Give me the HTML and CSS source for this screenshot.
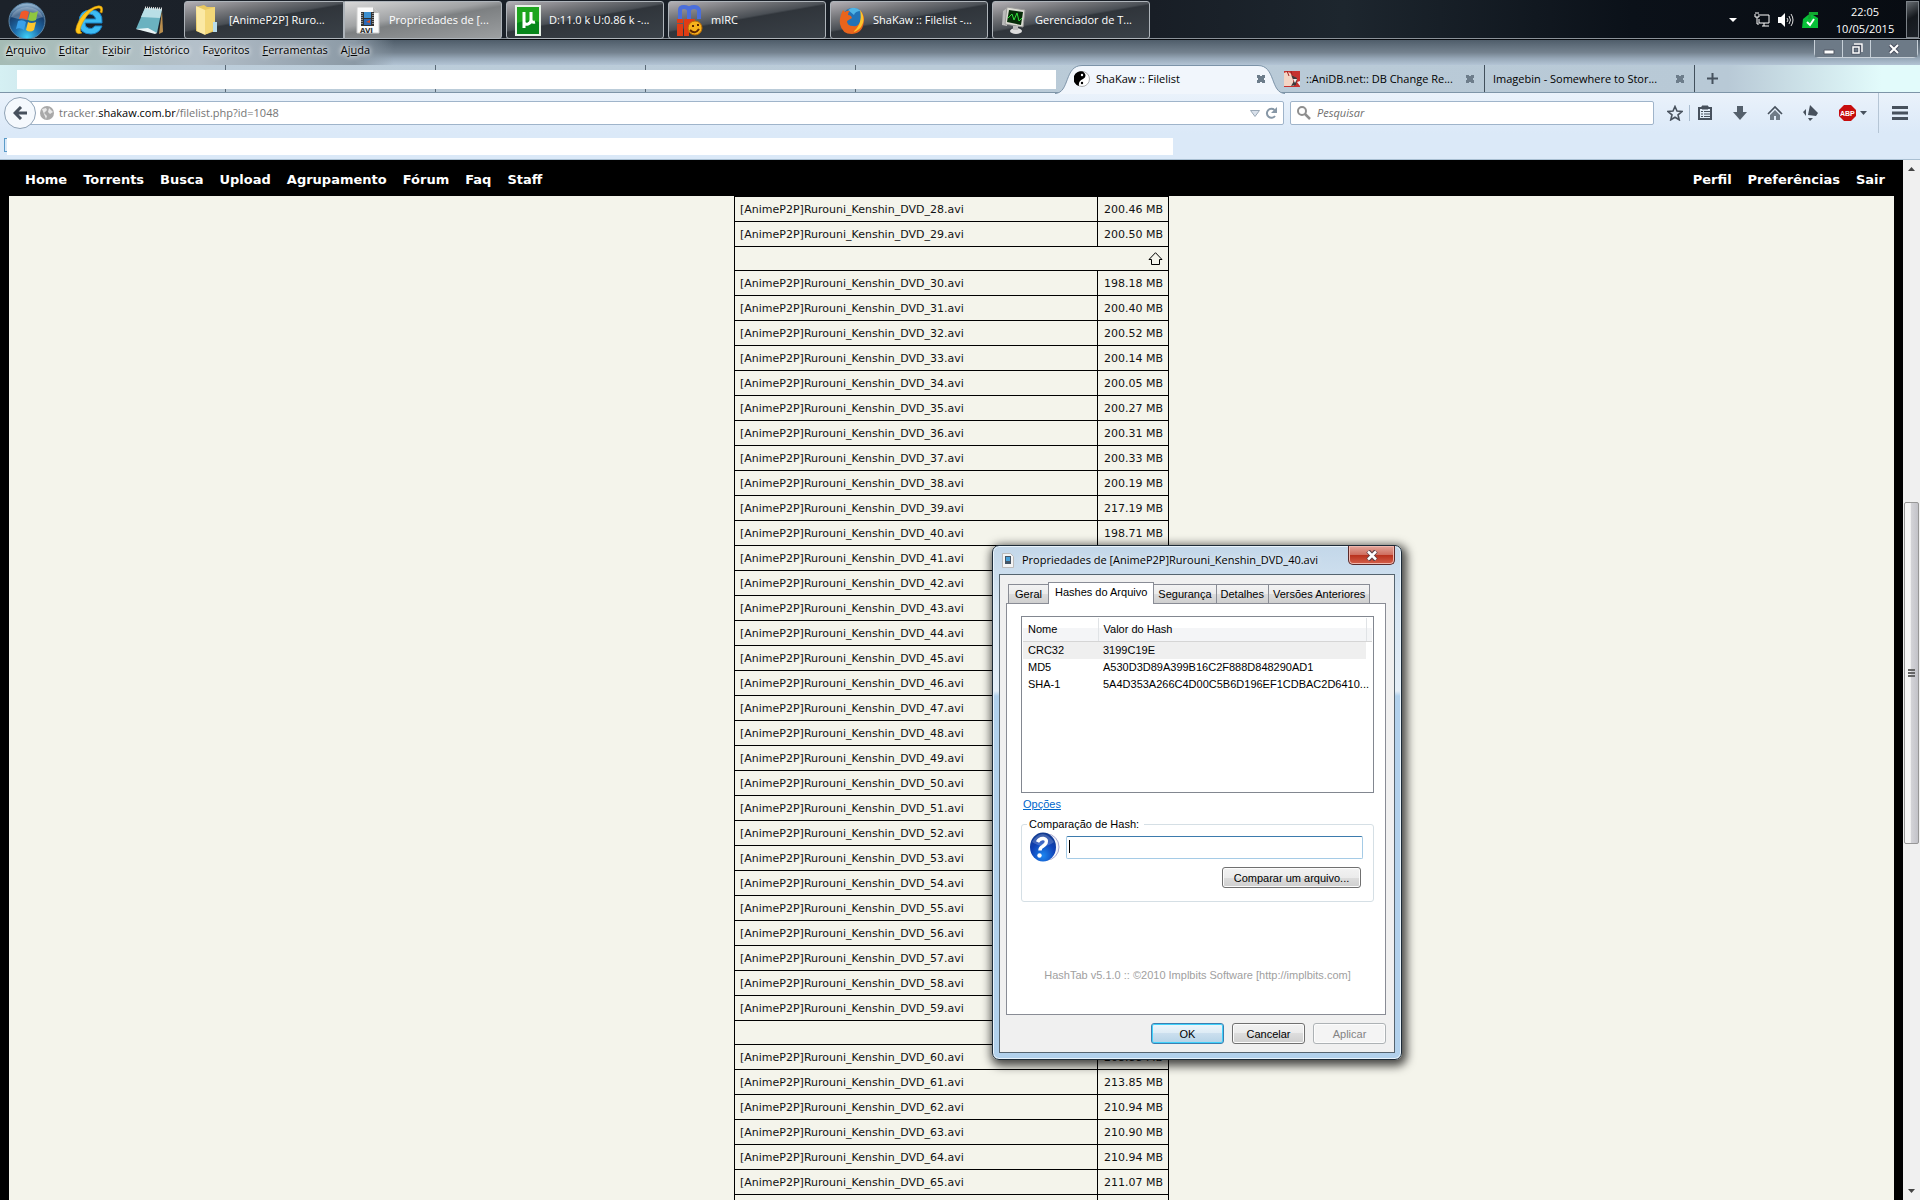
FILE: index.html
```html
<!DOCTYPE html>
<html lang="pt-BR">
<head>
<meta charset="utf-8">
<title>ShaKaw :: Filelist</title>
<link rel="stylesheet" href="styles.css">
</head>
<body>
<header class="taskbar">
  <div class="launchers">
    <button class="launch" aria-label="Iniciar"><svg width="40" height="38" viewBox="0 0 40 38"><defs><radialGradient id="orb" cx=".5" cy=".95" r=".9"><stop offset="0" stop-color="#3fd0f8"/><stop offset=".4" stop-color="#1f6fae"/><stop offset=".75" stop-color="#17406f"/><stop offset="1" stop-color="#8fb0cc"/></radialGradient></defs><circle cx="20" cy="20" r="18" fill="url(#orb)" stroke="#5d87a8"/><path d="M4 16a17 15 0 0 1 32 0q-15 6-32 0z" fill="#fff" opacity=".25"/><path d="M14 11q4-3 8 0l-2 8q-4-3-8-1z" fill="#f0592a"/><path d="M23 11q4 2 8-1l-2 9q-4 2-8 0z" fill="#8fc63f"/><path d="M11 20q5-2 8 1l-2 8q-4-3-8-1z" fill="#3aa0e8"/><path d="M21 21q3 2 8 0l-2 8q-4 3-8 0z" fill="#fdc62f"/></svg></button>
    <button class="launch" aria-label="Internet Explorer"><svg width="34" height="34" viewBox="0 0 34 34"><path d="M29 20q1-13-11-13T6 19q0 12 12 12 8 0 11-8h-7q-3 4-7 2-3-1-3-5zM12 16q1-5 5-5t6 5z" fill="#3dbcf4" fill-rule="evenodd" stroke="#1b86cc"/><path d="M29 10q3-10-8-6Q9 9 4 22q-4 11 5 8-4-2 1-11Q17 6 25 5q4 0 2 4z" fill="#ffc61a" stroke="#d99500" stroke-width=".6"/></svg></button>
    <button class="launch" aria-label="Bloco de notas"><svg width="34" height="34" viewBox="0 0 34 34"><path d="M29 7l1 22-4 2z" fill="#b98e4e"/><path d="M12 5l17 1-5 24-21-4z" fill="#6bb2c0"/><path d="M12 5l17 1-2 9L8 14z" fill="#b9dfe6"/><path d="M3 26l12-1 9 5-2 1z" fill="#e8f3f5"/><path d="M12 5l17 1" stroke="#ddd" stroke-width="3" stroke-dasharray="1 1"/></svg></button>
  </div>
  <nav class="tasks" aria-label="Janelas">
    <button class="task joined"><svg width="26" height="32" viewBox="0 0 26 32"><path d="M3 3l8-2 3 2h8v24l-8 3-6-1-5-2z" fill="#e9c860"/><path d="M3 2l9 4v25l-8-4z" fill="#fbe9a4"/><path d="M12 6l10-3v15q-3 1-2 8l-8 5z" fill="#f3d778"/><path d="M20 18h4v10h-4z" fill="#b8dcec"/></svg><span>[AnimeP2P] Ruro...</span></button>
    <button class="task active"><svg width="26" height="28" viewBox="0 0 26 28"><path d="M2 1h16l6 6v20H2z" fill="#fafafa" stroke="#ccc"/><path d="M18 1v6h6z" fill="#bbb"/><path d="M6 6h13v14H6z" fill="#333"/><path d="M9 6h7v6H9z" fill="#3c8fd0"/><path d="M9 13h7v6H9z" fill="#2a68b8"/><path d="M11 16l4-2v3z" fill="#d64a20"/><path d="M7 7v12M18 7v12" stroke="#eee" stroke-dasharray="1 1"/><text x="5" y="27" class="avi">AVI</text></svg><span>Propriedades de [...</span></button>
    <button class="task"><svg width="26" height="31" viewBox="0 0 26 31"><path d="M1 1h24v29H1z" fill="#1ea51e" stroke="#e8f2e8" stroke-width="2"/><path d="M2 18q12-5 22-1v12H2z" fill="#06861a"/><path d="M9 7v16M9 9v7q0 4 4 3 3-1 3-4V7M16 14q0 4 4 3" fill="none" stroke="#fff" stroke-width="3"/></svg><span>D:11.0 k U:0.86 k -...</span></button>
    <button class="task"><svg width="26" height="33" viewBox="0 0 26 33"><path d="M3 15V6q0-3 4-3t5 3v9M12 15V6q1-3 5-3t5 3v9" fill="none" stroke="#4a6edb" stroke-width="4"/><path d="M0 15h6v4H0zM0 20h6v12H0zM7 15h11v5h-6v12H7z" fill="#e03c14"/><circle cx="18" cy="24" r="7" fill="#f7b21c" stroke="#b86a08"/><path d="M13 26q5 5 9-1M16 21v2M21 20v2" fill="none" stroke="#5d2500" stroke-width="2"/></svg><span>mIRC</span></button>
    <button class="task"><svg width="26" height="32" viewBox="0 0 26 32"><circle cx="14" cy="15" r="11" fill="#2173b8"/><path d="M9 6q6-5 13 1-6 0-7 4z" fill="#4fb4e6"/><path d="M4 6q-4 8-3 14 2 10 12 10 12-1 12-15 0-5-4-9 3 6 0 12-2 5-7 4-6 0-6-5l5-3q-1-3-4-3 0-3 2-4-3-1-5 1z" fill="#e9641c"/><path d="M21 6q5 6 3 13-3 8-10 9 10-8 7-22z" fill="#fbc42c"/></svg><span>ShaKaw :: Filelist -...</span></button>
    <button class="task"><svg width="26" height="32" viewBox="0 0 26 32"><path d="M2 7l4-3v18l-5-1z" fill="#bbb"/><path d="M6 3l18 3-2 17L4 20z" fill="#dcdcd4" stroke="#999"/><path d="M8 6l14 2-2 13L6 18z" fill="#062c08"/><path d="M7 14l4-4 2 6 3-7 2 8 3-3" fill="none" stroke="#2fe03a"/><ellipse cx="15" cy="27" rx="6" ry="3" fill="#ddd"/><path d="M12 22h5v4h-5z" fill="#bbb"/></svg><span>Gerenciador de T...</span></button>
  </nav>
  <div class="tray">
    <svg width="8" height="4" viewBox="0 0 8 4"><path d="M0 0h8L4 4z" fill="#fff"/></svg>
    <svg width="16" height="16" viewBox="0 0 16 16" fill="none" stroke="#fff"><path d="M6 3h9v8H5V7M8 14h7M10 11v3M1 2v3h4V2M2 0v2M4 0v2M3 5v7h2"/></svg>
    <svg width="16" height="14" viewBox="0 0 16 14"><path d="M0 4h3l4-4v14l-4-4H0z" fill="#fff"/><path d="M9 5q2 2 0 4M11 3q3 4 0 8M13 1q4 6 0 12" fill="none" stroke="#ddd"/></svg>
    <svg width="17" height="16" viewBox="0 0 17 16"><path d="M1 7l5-4h5l5 3v10H0z" fill="#08c038"/><path d="M7 0h9v3H9v4H6z" fill="#12a830"/><path d="M5 10l3 3 4-6" fill="none" stroke="#fff" stroke-width="2"/></svg>
    <time class="clock">22:05<br>10/05/2015</time>
    <button class="show-desktop" aria-label="Mostrar área de trabalho"></button>
  </div>
</header>

<main class="browser">
  <div class="titlebar">
    <nav class="menu" aria-label="Menu">
      <button><u>A</u>rquivo</button><button><u>E</u>ditar</button><button>E<u>x</u>ibir</button><button><u>H</u>istórico</button><button>Fa<u>v</u>oritos</button><button><u>F</u>erramentas</button><button>Aj<u>u</u>da</button>
    </nav>
    <div class="controls">
      <button aria-label="Minimizar"><svg width="12" height="12" viewBox="0 0 12 12"><path d="M1 7h10v4H1z" fill="#fff" stroke="#555b66"/></svg></button>
      <button aria-label="Restaurar"><svg width="12" height="12" viewBox="0 0 12 12"><path d="M3 1h8v8M2 4h6v6H2z" fill="none" stroke="#4a5060" stroke-width="3"/><path d="M3 1h8v8M2 4h6v6H2z" fill="none" stroke="#fff" stroke-width="1.5"/></svg></button>
      <button class="close" aria-label="Fechar"><svg width="12" height="12" viewBox="0 0 12 12"><path d="M2 2l8 8M10 2l-8 8" stroke="#4a5060" stroke-width="4"/><path d="M2 2l8 8M10 2l-8 8" stroke="#fff" stroke-width="2"/></svg></button>
    </div>
  </div>

  <div class="tabstrip">
    <div class="tabs-left"><div class="hidden-tabs"><span class="blank"></span></div></div>
    <div class="tab current">
      <svg class="tabshape" width="230" height="29" viewBox="0 0 230 29"><path d="M0 28.500C15 28 9 .5 27 .5H203C221 .5 215 28 230 28.500V29H0z" fill="#f1f6fc"/><path d="M0 28.500C15 28 9 .5 27 .5H203C221 .5 215 28 230 28.500" fill="none" stroke="#7c93a8"/></svg>
      <svg width="16" height="16" viewBox="0 0 16 16"><circle cx="8" cy="8" r="7.500" fill="#fff" stroke="#777" stroke-width=".6"/><path d="M9 .5A7.500 7.500 0 0 0 5 15q-1-5 4-7 5-3 0-7.500z" fill="#000"/><circle cx="8" cy="4" r="1.200" fill="#fff"/><circle cx="8" cy="12" r="1.200"/></svg>
      <span>ShaKaw :: Filelist</span><button class="x" aria-label="Fechar aba"></button>
    </div>
    <div class="tab">
      <svg width="16" height="16" viewBox="0 0 16 16"><path d="M0 0h16v16H0z" fill="#c5322f"/><path d="M0 2q5-3 8 2l2 11H0z" fill="#f3d5c5"/><path d="M7 4l6 3-1 7-5 1 3-5z" fill="#3d3b3d"/><path d="M9 8l4 0-2 4zM13 11l3-1v5z" fill="#eee"/><path d="M3 0l2 5M7 0l1 4" stroke="#9e2020"/></svg>
      <span>::AniDB.net:: DB Change Re...</span><button class="x" aria-label="Fechar aba"></button>
    </div>
    <div class="tab plain"><span>Imagebin - Somewhere to Stor...</span><button class="x" aria-label="Fechar aba"></button></div>
    <button class="newtab" aria-label="Nova aba"><svg width="11" height="11" viewBox="0 0 11 11"><path d="M5.500 0v11M0 5.500h11" stroke="#46525e" stroke-width="2"/></svg></button>
  </div>

  <div class="toolbar">
    <button class="back" aria-label="Voltar"><svg width="14" height="14" viewBox="0 0 14 14"><path d="M8 1L2 7l6 6M2 7h12" fill="none" stroke="#47515d" stroke-width="3"/></svg></button>
    <div class="urlbar">
      <svg width="14" height="14" viewBox="0 0 14 14"><circle cx="7" cy="7" r="7" fill="#a9a9a9"/><path d="M2 3l4-1 1 2-3 3 3 3-1 3M9 2l4 4-3 2-2-2z" fill="#e8e8e8"/></svg>
      <div class="url" role="textbox" aria-label="Endereço">tracker.<b>shakaw.com.br</b>/filelist.php?id=1048</div>
      <svg width="10" height="7" viewBox="0 0 10 7"><path d="M.5.500h9L5 6.500z" fill="#d8e0ea" stroke="#9aa8b6"/></svg>
      <button aria-label="Recarregar"><svg width="12" height="12" viewBox="0 0 12 12"><path d="M10 9a4.500 4.500 0 1 1-.5-6" fill="none" stroke="#8797a6" stroke-width="2"/><path d="M12 0v6H6z" fill="#8797a6"/></svg></button>
    </div>
    <label class="search"><svg width="14" height="14" viewBox="0 0 14 14"><circle cx="5" cy="5" r="4" fill="none" stroke="#8f8f8f" stroke-width="2"/><path d="M8 8l5 5" stroke="#8f8f8f" stroke-width="2.500"/></svg><input type="text" placeholder="Pesquisar" aria-label="Pesquisar"></label>
    <div class="icons">
      <button aria-label="Favoritar"><svg width="16" height="16" viewBox="0 0 16 16"><path d="M8 1.500l2 4.500 5 .5-4 3.300 1.200 5L8 12.200l-4.200 2.600L5 9.800 1 6.500 6 6z" fill="none" stroke="#47515d" stroke-width="1.600"/></svg></button>
      <button class="rule" aria-label="Lista"><svg width="16" height="16" viewBox="0 0 16 16"><path d="M2 3h12v11H2z" fill="none" stroke="#47515d" stroke-width="2"/><path d="M5 1h6v3H5zM4 6.500h2M7 6.500h6M4 9h2M7 9h6M4 11.500h2M7 11.500h6" fill="#47515d" stroke="#47515d"/></svg></button>
      <button aria-label="Downloads"><svg width="16" height="16" viewBox="0 0 16 16"><path d="M5 1h6v6h4l-7 8-7-8h4z" fill="#54606c"/></svg></button>
      <button aria-label="Início"><svg width="16" height="16" viewBox="0 0 16 16"><path d="M1 9l7-7 7 7" fill="none" stroke="#47515d" stroke-width="1.600"/><path d="M8 5l5 5v5H9v-4H7v4H3v-5z" fill="#6f7b87"/></svg></button>
      <button aria-label="Sincronizar"><svg width="18" height="16" viewBox="0 0 18 16"><path d="M8 0l8 8-2 3-8-1zM1 7l3-3v7zM6 13h5l-3 3z" fill="#47515d"/></svg></button>
      <button class="abp" aria-label="Adblock Plus"><svg width="28" height="16" viewBox="0 0 28 16"><path d="M5 0h7l5 5v6l-5 5H5l-5-5V5z" fill="#c70d0d"/><text x="1" y="11" class="abptext">ABP</text><path d="M21 6h7l-3.500 4z" fill="#47515d"/></svg></button>
      <button class="burger" aria-label="Abrir menu"><svg width="16" height="14" viewBox="0 0 16 14"><path d="M0 1.500h16M0 7h16M0 12.500h16" stroke="#47515d" stroke-width="3"/></svg></button>
    </div>
  </div>
  <div class="bookmarks"><span class="bookmark-icon"></span><span class="blank"></span></div>

  <div class="viewport">
    <div class="page">
      <nav class="sitenav">
        <div><a href="#">Home</a><a href="#">Torrents</a><a href="#">Busca</a><a href="#">Upload</a><a href="#">Agrupamento</a><a href="#">Fórum</a><a href="#">Faq</a><a href="#">Staff</a></div>
        <div><a href="#">Perfil</a><a href="#">Preferências</a><a href="#">Sair</a></div>
      </nav>
      <div class="content">
        <table class="files">
          <tbody>
          <tr><td>[AnimeP2P]Rurouni_Kenshin_DVD_28.avi</td><td>200.46 MB</td></tr>
          <tr><td>[AnimeP2P]Rurouni_Kenshin_DVD_29.avi</td><td>200.50 MB</td></tr>
          <tr class="up"><td colspan="2"><a href="#" aria-label="Topo"><svg width="15" height="13" viewBox="0 0 15 13"><path d="M7.500.7l6.500 6.800h-2.500v5h-8v-5H1z" fill="none" stroke="#000"/></svg></a></td></tr>
          <tr><td>[AnimeP2P]Rurouni_Kenshin_DVD_30.avi</td><td>198.18 MB</td></tr>
          <tr><td>[AnimeP2P]Rurouni_Kenshin_DVD_31.avi</td><td>200.40 MB</td></tr>
          <tr><td>[AnimeP2P]Rurouni_Kenshin_DVD_32.avi</td><td>200.52 MB</td></tr>
          <tr><td>[AnimeP2P]Rurouni_Kenshin_DVD_33.avi</td><td>200.14 MB</td></tr>
          <tr><td>[AnimeP2P]Rurouni_Kenshin_DVD_34.avi</td><td>200.05 MB</td></tr>
          <tr><td>[AnimeP2P]Rurouni_Kenshin_DVD_35.avi</td><td>200.27 MB</td></tr>
          <tr><td>[AnimeP2P]Rurouni_Kenshin_DVD_36.avi</td><td>200.31 MB</td></tr>
          <tr><td>[AnimeP2P]Rurouni_Kenshin_DVD_37.avi</td><td>200.33 MB</td></tr>
          <tr><td>[AnimeP2P]Rurouni_Kenshin_DVD_38.avi</td><td>200.19 MB</td></tr>
          <tr><td>[AnimeP2P]Rurouni_Kenshin_DVD_39.avi</td><td>217.19 MB</td></tr>
          <tr><td>[AnimeP2P]Rurouni_Kenshin_DVD_40.avi</td><td>198.71 MB</td></tr>
          <tr><td>[AnimeP2P]Rurouni_Kenshin_DVD_41.avi</td><td></td></tr>
          <tr><td>[AnimeP2P]Rurouni_Kenshin_DVD_42.avi</td><td></td></tr>
          <tr><td>[AnimeP2P]Rurouni_Kenshin_DVD_43.avi</td><td></td></tr>
          <tr><td>[AnimeP2P]Rurouni_Kenshin_DVD_44.avi</td><td></td></tr>
          <tr><td>[AnimeP2P]Rurouni_Kenshin_DVD_45.avi</td><td></td></tr>
          <tr><td>[AnimeP2P]Rurouni_Kenshin_DVD_46.avi</td><td></td></tr>
          <tr><td>[AnimeP2P]Rurouni_Kenshin_DVD_47.avi</td><td></td></tr>
          <tr><td>[AnimeP2P]Rurouni_Kenshin_DVD_48.avi</td><td></td></tr>
          <tr><td>[AnimeP2P]Rurouni_Kenshin_DVD_49.avi</td><td></td></tr>
          <tr><td>[AnimeP2P]Rurouni_Kenshin_DVD_50.avi</td><td></td></tr>
          <tr><td>[AnimeP2P]Rurouni_Kenshin_DVD_51.avi</td><td></td></tr>
          <tr><td>[AnimeP2P]Rurouni_Kenshin_DVD_52.avi</td><td></td></tr>
          <tr><td>[AnimeP2P]Rurouni_Kenshin_DVD_53.avi</td><td></td></tr>
          <tr><td>[AnimeP2P]Rurouni_Kenshin_DVD_54.avi</td><td></td></tr>
          <tr><td>[AnimeP2P]Rurouni_Kenshin_DVD_55.avi</td><td></td></tr>
          <tr><td>[AnimeP2P]Rurouni_Kenshin_DVD_56.avi</td><td></td></tr>
          <tr><td>[AnimeP2P]Rurouni_Kenshin_DVD_57.avi</td><td></td></tr>
          <tr><td>[AnimeP2P]Rurouni_Kenshin_DVD_58.avi</td><td></td></tr>
          <tr><td>[AnimeP2P]Rurouni_Kenshin_DVD_59.avi</td><td></td></tr>
          <tr class="up"><td colspan="2"></td></tr>
          <tr><td>[AnimeP2P]Rurouni_Kenshin_DVD_60.avi</td><td>208.88 MB</td></tr>
          <tr><td>[AnimeP2P]Rurouni_Kenshin_DVD_61.avi</td><td>213.85 MB</td></tr>
          <tr><td>[AnimeP2P]Rurouni_Kenshin_DVD_62.avi</td><td>210.94 MB</td></tr>
          <tr><td>[AnimeP2P]Rurouni_Kenshin_DVD_63.avi</td><td>210.90 MB</td></tr>
          <tr><td>[AnimeP2P]Rurouni_Kenshin_DVD_64.avi</td><td>210.94 MB</td></tr>
          <tr><td>[AnimeP2P]Rurouni_Kenshin_DVD_65.avi</td><td>211.07 MB</td></tr>
          <tr><td></td><td></td></tr>
          </tbody>
        </table>
      </div>
    </div>
    <div class="scrollbar">
      <svg width="7" height="4" viewBox="0 0 7 4"><path d="M3.500 0L7 4H0z" fill="#444"/></svg>
      <div class="track"><div class="thumb"><i></i><i></i><i></i></div></div>
      <svg width="7" height="4" viewBox="0 0 7 4"><path d="M3.500 4L7 0H0z" fill="#444"/></svg>
    </div>
  </div>
</main>

<section class="dialog" role="dialog" aria-label="Propriedades">
  <header class="dialog-title">
    <svg width="12" height="15" viewBox="0 0 12 15"><path d="M.5.500h8l3 3v11H.5z" fill="#f4f4f4" stroke="#bbb"/><path d="M3 3h6v8H3z" fill="#456"/><path d="M4 4h4v4H4z" fill="#48a0d8"/></svg>
    <h2>Propriedades de [AnimeP2P]Rurouni_Kenshin_DVD_40.avi</h2>
    <button class="dialog-close" aria-label="Fechar"><svg width="12" height="11" viewBox="0 0 12 11"><path d="M2 1l8 9M10 1l-8 9" stroke="#5a4048" stroke-width="4.500"/><path d="M2 1.500l8 8M10 1.500l-8 8" stroke="#fff" stroke-width="2.500"/></svg></button>
  </header>
  <div class="dialog-body">
    <div class="dtabs"><button>Geral</button><button class="on">Hashes do Arquivo</button><button>Segurança</button><button>Detalhes</button><button>Versões Anteriores</button></div>
    <div class="panel">
      <div class="hashbox">
        <table class="hashes">
          <thead><tr><th>Nome</th><th>Valor do Hash</th><th class="end"></th></tr></thead>
          <tbody>
            <tr class="sel"><td>CRC32</td><td>3199C19E</td></tr>
            <tr><td>MD5</td><td>A530D3D89A399B16C2F888D848290AD1</td></tr>
            <tr><td>SHA-1</td><td>5A4D353A266C4D00C5B6D196EF1CDBAC2D6410...</td></tr>
          </tbody>
        </table>
      </div>
      <a class="options" href="#">Opções</a>
      <fieldset class="compare">
        <legend><label for="hash">Comparação de Hash:</label></legend>
        <div class="compare-row">
          <svg width="30" height="30" viewBox="0 0 30 30"><defs><radialGradient id="q" cx=".5" cy=".8" r=".8"><stop offset="0" stop-color="#1d86f0"/><stop offset=".6" stop-color="#0f3fb4"/><stop offset="1" stop-color="#123a8c"/></radialGradient></defs><ellipse cx="17" cy="15" rx="12" ry="13" fill="#f4f4fb" stroke="#a9a9cf"/><ellipse cx="13" cy="15" rx="13" ry="14.500" fill="url(#q)"/><path d="M2 10q10-16 22 0-10 8-22 0z" fill="#fff" opacity=".2"/><path d="M7.500 10q2-4 6-3.500 4 1 2.500 4.500-1 2-3.500 3.500-2.500 1-2.500 4" fill="none" stroke="#fff" stroke-width="3.500"/><circle cx="9.500" cy="23.500" r="2.200" fill="#fff"/></svg>
          <input id="hash" type="text">
        </div>
        <button class="btn wide">Comparar um arquivo...</button>
      </fieldset>
      <p class="credit">HashTab v5.1.0 :: ©2010 Implbits Software [http://implbits.com]</p>
    </div>
    <footer class="actions"><button class="btn default">OK</button><button class="btn">Cancelar</button><button class="btn" disabled>Aplicar</button></footer>
  </div>
</section>
</body>
</html>
```
FILE: styles.css
```css
* { box-sizing: border-box; }
body {
  margin: 0;
  height: 100vh;
  display: flex;
  flex-direction: column;
  overflow: hidden;
  background: #000;
  font: 11px/16px "Open Sans", "Noto Sans", sans-serif;
  color: #000;
}
button { font: inherit; color: inherit; border: 0; padding: 0; margin: 0; background: none; }
svg { display: block; flex: none; }

/* Taskbar */
.taskbar {
  height: 40px;
  flex: none;
  display: flex;
  align-items: stretch;
  background: linear-gradient(90deg, #1c222a, #181e26 60%, #1d262e 70%, #0b1119 85%, #080c12);
  border-bottom: 1px solid #05080c;
  box-shadow: inset 0 -1px #8b9299;
}
.launchers { display: flex; width: 184px; padding-left: 7px; gap: 26px; align-items: center; }
.tasks { display: flex; gap: 4px; padding-top: 1px; flex: 1; }
.task {
  display: flex;
  align-items: center;
  gap: 8px;
  width: 158px;
  height: 38px;
  padding: 0 0 0 8px;
  color: #fff;
  white-space: nowrap;
  border: 1px solid #aeb4ba;
  border-radius: 3px;
  background: linear-gradient(170deg, #b3b0b5 0, #77787c 25%, #4a4f55 45%, #30353b 48%, #3a4148 100%);
}
.task.joined { gap: 10px; width: 160px; margin-right: -4px; border-radius: 3px 0 0 3px; }
.task.active { padding-left: 10px; background: linear-gradient(170deg, #d8d8d8, #a0a2a4 40%, #7d8082 50%, #9c9fa1); border-radius: 0 3px 3px 0; }
.avi { font: bold 7px "DejaVu Sans", sans-serif; fill: #333; }
.tray { display: flex; align-items: center; gap: 8px; }
.tray svg:first-child { margin-right: 9px; }
.clock { color: #fff; text-align: center; line-height: 17px; width: 70px; margin: 0 2px 0 3px; }
.show-desktop { align-self: stretch; width: 13px; margin: 1px 1px 1px -4px; border: 1px solid #7c8288; background: linear-gradient(150deg, #666b70, #15191e 45%, #1d2228); }

/* Browser chrome */
.browser { flex: 1; min-height: 0; display: flex; flex-direction: column; background: #b9cad8; }
.titlebar {
  height: 25px;
  flex: none;
  display: flex;
  justify-content: space-between;
  align-items: flex-start;
  background: linear-gradient(#4f5d6a, #74828f 50%, #98a9b9 75%, #b3c4d5);
}
.menu { display: flex; gap: 13px; padding: 2px 24px 0 6px; background: linear-gradient(90deg, #a5bcb5, #b4c0ca 50%, #8b99a5 90%, transparent); text-shadow: 0 0 4px #fff, 0 0 6px #fff; height: 25px; }
.menu button { text-shadow: inherit; height: 16px; }
.controls { display: flex; margin-right: 2px; border: 1px solid #c7d0d8; border-top: 0; border-radius: 0 0 5px 5px; }
.controls button { width: 28px; height: 17px; display: flex; align-items: center; justify-content: center; background: #6d7a87; border-right: 1px solid #c7d0d8; }
.controls .close { width: 46px; border: 0; }
.tabstrip { height: 28px; flex: none; display: flex; align-items: stretch; background: linear-gradient(90deg, #d5f0f3, #bccdda 8%, #b8c9d6 90%, #e2fbfb 98%); border-bottom: 1px solid #7e95a8; }
.tabs-left { flex: 1; padding: 0 10px 0 16px; }
.hidden-tabs { height: 27px; display: flex; padding: 5px 0 3px 1px; background: repeating-linear-gradient(90deg, transparent 0 209px, #5b6a77 209px 210px); }
.hidden-tabs .blank { flex: 1; }
.blank { background: #fff; }
.tab { display: flex; align-items: center; gap: 6px; width: 209px; padding: 0 10px 0 8px; white-space: nowrap; border-right: 1px solid #42505c; }
.tab span { flex: 1; }
.tab.current { position: relative; width: 210px; border: 0; padding: 0 11px 0 8px; z-index: 1; }
.tab.current > * { position: relative; }
.tab.current .tabshape { position: absolute; left: -11px; top: 0; }
.tab.plain { padding: 0 10px 0 8px; width: 210px; }
.x { width: 8px; height: 8px; background: linear-gradient(45deg, transparent 36%, #6d7d8b 36% 64%, transparent 64%), linear-gradient(-45deg, transparent 36%, #6d7d8b 36% 64%, transparent 64%); }
.newtab { width: 225px; padding-left: 12px; }
.toolbar { height: 40px; flex: none; display: flex; align-items: center; padding-left: 4px; background: linear-gradient(#eaf2fb, #dbe9f8); }
.back { width: 32px; height: 32px; flex: none; border: 1px solid #8fa2b5; border-radius: 16px; background: #f5f9fd; display: flex; align-items: center; justify-content: center; z-index: 1; }
.urlbar, .search { height: 24px; display: flex; align-items: center; background: #fff; border: 1px solid #9fb4ca; border-radius: 2px; }
.urlbar { flex: 1; margin-left: -8px; padding: 0 6px 0 11px; gap: 5px; }
.url { flex: 1; color: #757575; }
.url b { color: #000; font-weight: normal; }
.search { width: 364px; margin-left: 6px; padding-left: 6px; gap: 6px; }
.search input { flex: 1; border: 0; padding: 0; outline: 0; background: none; font: italic 11px/16px "Open Sans", "Noto Sans", sans-serif; }
.search input::placeholder { color: #6e6e6e; }
.icons { display: flex; align-items: center; align-self: stretch; width: 266px; padding-left: 13px; gap: 19px; }
.icons .rule { border-left: 1px solid #a9bccf; padding-left: 7px; margin: 0 0 0 -13px; }
.icons .abp { margin-right: -8px; }
.abptext { font: bold 7px "Liberation Sans", sans-serif; fill: #fff; }
.burger { border-left: 1px solid #b5c5d5; align-self: stretch; padding: 0 12px 0 13px; }
.bookmarks { height: 27px; flex: none; display: flex; padding: 5px 0 4px 4px; background: #dbe9f8; border-bottom: 1px solid #a9bfd2; }
.bookmark-icon { width: 3px; margin-bottom: 3px; border: 1px solid #5b9bc8; border-right: 0; }
.bookmarks .blank { width: 1166px; }

/* Page */
.viewport { flex: 1; min-height: 0; display: flex; }
.page { flex: 1; display: flex; flex-direction: column; background: #000; overflow: hidden; }
.sitenav { height: 36px; flex: none; display: flex; justify-content: space-between; align-items: center; padding: 3px 18px 0 25px; font: bold 13px/17px "DejaVu Sans", Verdana, sans-serif; }
.sitenav div { display: flex; gap: 16px; }
.sitenav a { color: #fff; text-decoration: none; }
.content { flex: 1; min-height: 0; overflow: hidden; margin: 0 9px; background: #f4f4eb; }
.files { margin: 0 auto; width: 435px; border-collapse: collapse; table-layout: fixed; font: 11px/14px "DejaVu Sans", Verdana, sans-serif; color: #111; }
.files td { height: 25px; padding: 2px 5px 0; border: 1px solid #000; white-space: nowrap; overflow: hidden; }
.files td:nth-child(2) { width: 71px; text-align: right; }
.files .up td { height: 24px; padding-top: 0; }
.files .up a { display: block; width: 15px; margin-left: auto; }
.scrollbar { width: 17px; display: flex; flex-direction: column; align-items: center; background: #f0f0f0; padding: 7px 0; }
.track { flex: 1; align-self: stretch; padding: 331px 1px 0 1px; }
.thumb { height: 342px; border: 1px solid #979797; border-radius: 2px; background: linear-gradient(90deg, #f6f6f6 0 40%, #d2d2d6 50%, #c2c2c8); display: flex; flex-direction: column; gap: 1px; align-items: center; justify-content: center; }
.thumb i { width: 7px; height: 2px; background: #666; }

/* Properties window */
.dialog {
  position: absolute;
  left: 992px;
  top: 545px;
  width: 410px;
  padding: 0 6px 6px;
  border: 1px solid #1d2b38;
  border-radius: 7px;
  background: linear-gradient(#c3d7e9, #d7e6f3 60px, #e4eef7 145px, #b2d1ec 150px, #b2d1ec);
  box-shadow: inset 0 0 0 1px #e9f4fc, 2px 3px 10px 3px rgba(0, 0, 0, .7);
  font: 11px/16px "Liberation Sans", Arial, sans-serif;
}
.dialog-title { height: 28px; display: flex; align-items: center; gap: 8px; padding-left: 3px; }
.dialog-title h2 { flex: 1; margin: 0; font: 11px/16px "Open Sans", "Noto Sans", sans-serif; white-space: nowrap; text-shadow: 0 0 6px #fff; }
.dialog-close { align-self: flex-start; width: 47px; height: 19px; display: flex; align-items: center; justify-content: center; border: 1px solid #5a2a2a; border-top: 0; border-radius: 0 0 5px 5px; background: linear-gradient(#e3a69b, #cf6f60 48%, #b8301c 50%, #d4614b); box-shadow: inset 0 0 0 1px #f0b8ae; }
.dialog-body { border: 1px solid #55646f; background: #f0f0f0; padding: 7px 8px 8px 6px; }
.dtabs { display: flex; align-items: flex-end; padding-left: 2px; margin-right: 18px; height: 21px; }
.dtabs button { height: 19px; padding: 0 4px; text-align: center; border: 1px solid #898c95; border-bottom: 0; background: linear-gradient(#f3f3f3, #ebebeb 50%, #ddd 50%, #cfcfcf); white-space: nowrap; flex: auto; margin-left: -1px; }
.dtabs button:first-child { flex: 0 0 41px; margin-left: 0; }
.dtabs .on { height: 22px; margin-bottom: -1px; padding: 0 6px 3px; background: #fff; z-index: 1; }
.panel { height: 412px; border: 1px solid #898c95; background: #fff; padding: 12px 11px 0 14px; }
.hashbox { height: 177px; border: 1px solid #828790; padding: 1px; }
.hashes { width: 100%; border-collapse: collapse; table-layout: fixed; }
.hashes th, .hashes td { padding: 0 0 0 5px; font-weight: normal; text-align: left; white-space: nowrap; }
.hashes th { height: 23px; border-right: 1px solid #e0e3e6; border-bottom: 1px solid #d5d5d5; background: linear-gradient(#fff 45%, #f4f5f7 45%); }
.hashes th:first-child { width: 75px; }
.hashes .end { width: 6px; padding: 0; border-right: 0; }
.hashes td { height: 17px; line-height: 17px; }
.hashes .sel td { background: #efefef; }
.options { display: block; width: max-content; margin: 3px 0 4px 2px; color: #0066cc; }
.compare { margin: 0; height: 86px; padding: 0 10px 0 8px; border: 1px solid #d5dfe5; border-radius: 3px; min-width: 0; }
.compare legend { padding: 0 5px 0 2px; margin-left: -3px; }
.compare-row { display: flex; gap: 6px; align-items: center; height: 30px; }
.compare input {
  flex: 1;
  min-width: 0;
  height: 23px;
  border: 1px solid #a5cbe6;
  border-top-color: #3d7bad;
  border-radius: 2px;
  outline: 0;
  padding: 0 2px;
  font: inherit;
  background: linear-gradient(#000, #000) 2px 3px / 1px 13px no-repeat #fff;
}
.btn { width: 73px; height: 21px; border: 1px solid #707070; border-radius: 3px; box-shadow: inset 0 0 0 1px #fcfcfc; background: linear-gradient(#f2f2f2, #ebebeb 50%, #ddd 50%, #cfcfcf); }
.btn.wide { display: block; width: 139px; margin: 5px 2px 0 auto; }
.btn.default { border-color: #3c7fb1; box-shadow: inset 0 0 0 1px #41d1fb; background: linear-gradient(#eef6fb, #dcebf5 50%, #cbdfee 50%, #b5d3e7); }
.btn:disabled { border-color: #adb2b5; color: #838383; background: #f4f4f4; }
.credit { margin: 65px 0 0; text-align: center; color: #a0a0a0; white-space: nowrap; }
.actions { display: flex; gap: 8px; justify-content: flex-end; padding-top: 8px; }
```
